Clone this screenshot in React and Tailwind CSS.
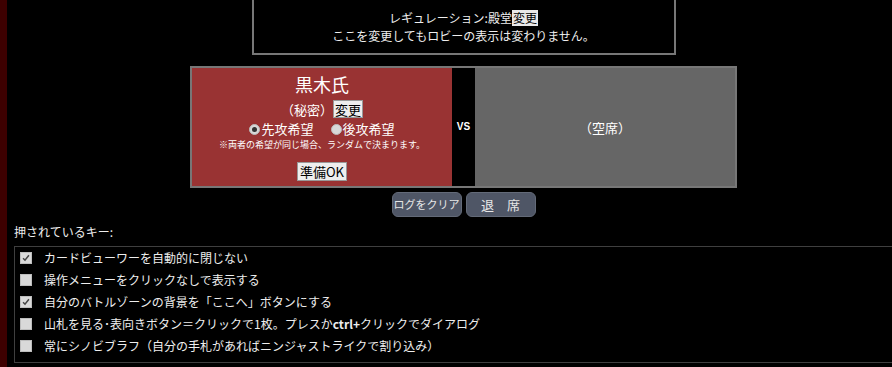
import React from "react";

function Check({ checked }) {
  return (
    <span className="relative inline-block w-[12px] h-[12px] bg-[#d9d9d9] border border-[#bdbdbd] shrink-0">
      {checked && (
        <svg viewBox="0 0 12 12" className="absolute inset-0 w-full h-full">
          <path d="M2.5 6.2 L4.8 8.6 L9.5 2.8" stroke="#444" strokeWidth="1.8" fill="none" />
        </svg>
      )}
    </span>
  );
}

function Radio({ checked }) {
  return (
    <span className="inline-flex items-center justify-center w-[11px] h-[11px] rounded-full bg-[#d8d8d8] border border-[#bbb] shrink-0">
      {checked && <span className="w-[5px] h-[5px] rounded-full bg-[#333]" />}
    </span>
  );
}

const rows = [
  { checked: true, text: <>カードビューワーを自動的に閉じない</> },
  { checked: false, text: <>操作メニューをクリックなしで表示する</> },
  { checked: true, text: <>自分のバトルゾーンの背景を「ここへ」ボタンにする</> },
  {
    checked: false,
    text: (
      <>
        山札を見る･表向きボタン＝クリックで1枚。プレスか<b className="font-bold">ctrl+</b>クリックでダイアログ
      </>
    ),
  },
  { checked: false, text: <>常にシノビブラフ（自分の手札があればニンジャストライクで割り込み）</> },
];

export default function App() {
  return (
    <div className="w-[892px] h-[367px] overflow-hidden bg-black flex text-[#eee] font-['Noto_Sans_CJK_JP','Noto_Sans',sans-serif] text-[12px] leading-none">
      <div className="w-[7px] h-full bg-[#3d0000] shrink-0" />
      <div className="flex-1 flex flex-col">
        <div className="ml-[183px] w-[547px] flex flex-col items-center">
          <div className="w-[424px] h-[55px] border-2 border-t-0 border-[#777] flex flex-col items-center pt-[10px]">
            <div className="flex items-center h-[16px]">
              <span>レギュレーション:殿堂</span>
              <span className="bg-[#e8e8e8] text-black px-[1px] h-[16px] flex items-center">変更</span>
            </div>
            <div className="mt-[3px] h-[14px] flex items-center">ここを変更してもロビーの表示は変わりません。</div>
          </div>

          <div className="mt-[11px] w-[547px] h-[122px] border-2 border-[#777] flex">
            <div className="w-[260px] bg-[#993333] flex flex-col items-center pt-[6px] text-white">
              <div className="text-[18px] h-[20px] flex items-center">黒木氏</div>
              <div className="mt-[6px] flex items-center text-[13px] h-[18px]">
                <span>（秘密）</span>
                <span className="bg-[#eee] text-black border border-[#999] px-[1px] h-[18px] flex items-center">変更</span>
              </div>
              <div className="mt-[3px] flex items-center text-[13px] h-[16px] leading-[16px]">
                <Radio checked />
                <span className="ml-[1px]">先攻希望</span>
                <span className="w-[17px]" />
                <Radio />
                <span className="ml-[1px]">後攻希望</span>
              </div>
              <div className="mt-[2px] text-[9px] h-[12px] leading-[12px]">※両者の希望が同じ場合、ランダムで決まります。</div>
              <div className="mt-[11px] bg-[#eee] text-black border border-[#999] text-[13px] px-[2px] h-[19px] flex items-center">準備OK</div>
            </div>
            <div className="w-[23px] bg-black flex items-center justify-center text-[10px] font-bold font-['Liberation_Sans',sans-serif] text-white">
              VS
            </div>
            <div className="flex-1 bg-[#666] flex items-center justify-center text-[13px] text-white">
              （空席）
            </div>
          </div>

          <div className="mt-[4px] flex gap-[4px]">
            <button className="w-[70px] h-[25px] p-0 whitespace-nowrap rounded-[6px] bg-[#4f5666] border border-[#636a78] text-[#e6e6e6] text-[11px] flex items-center justify-center">
              ログをクリア
            </button>
            <button className="w-[70px] h-[25px] p-0 whitespace-nowrap rounded-[6px] bg-[#4f5666] border border-[#636a78] text-[#e6e6e6] text-[13px] flex items-center justify-center">
              退　席
            </button>
          </div>
        </div>

        <div className="ml-[7px] mt-[8px] h-[14px] flex items-center">押されているキー:</div>
        <div className="ml-[7px] mt-[7px] w-[900px] border border-[#3f3f3f] pb-[5px]">
          {rows.map((r, i) => (
            <div key={i} className="h-[22px] flex items-center pl-[5px]">
              <Check checked={r.checked} />
              <span className="ml-[12px]">{r.text}</span>
            </div>
          ))}
        </div>
      </div>
    </div>
  );
}
